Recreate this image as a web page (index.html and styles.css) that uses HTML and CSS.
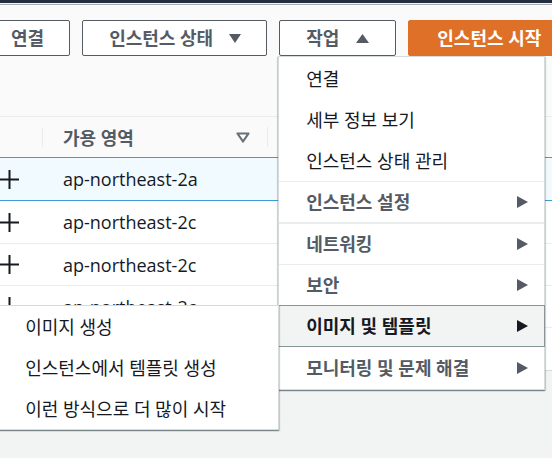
FILE: index.html
```html
<!DOCTYPE html>
<html lang="ko">
<head>
<meta charset="utf-8">
<link rel="stylesheet" href="styles.css">
</head>
<body>
<div class="topbar"></div>
<div class="topline"></div>
<div class="page">
  <div class="toolbar">
    <button class="btn">연결</button>
    <button class="btn">인스턴스 상태
      <svg class="caret" width="12" height="9" viewBox="0 0 12 9"><polygon points="0,0 12,0 6,9" fill="#545b64"/></svg>
    </button>
    <div class="actions">
      <button class="btn">작업
        <svg class="caret" width="13" height="9" viewBox="0 0 13 9"><polygon points="0,9 13,9 6.5,0" fill="#545b64"/></svg>
      </button>
      <ul class="menu">
        <li class="item">연결</li>
        <li class="item">세부 정보 보기</li>
        <li class="item">인스턴스 상태 관리</li>
        <li class="cat first">인스턴스 설정
          <svg class="arrow" width="11" height="12" viewBox="0 0 11 12"><polygon points="0,0 11,6 0,12" fill="#545b64"/></svg>
        </li>
        <li class="cat">네트워킹
          <svg class="arrow" width="11" height="12" viewBox="0 0 11 12"><polygon points="0,0 11,6 0,12" fill="#545b64"/></svg>
        </li>
        <li class="cat">보안
          <svg class="arrow" width="11" height="12" viewBox="0 0 11 12"><polygon points="0,0 11,6 0,12" fill="#545b64"/></svg>
        </li>
        <li class="cat active">이미지 및 템플릿
          <svg class="arrow" width="11" height="12" viewBox="0 0 11 12"><polygon points="0,0 11,6 0,12" fill="#16191f"/></svg>
          <ul class="sub">
            <li class="item">이미지 생성</li>
            <li class="item">인스턴스에서 템플릿 생성</li>
            <li class="item">이런 방식으로 더 많이 시작</li>
          </ul>
        </li>
        <li class="cat after">모니터링 및 문제 해결
          <svg class="arrow" width="11" height="12" viewBox="0 0 11 12"><polygon points="0,0 11,6 0,12" fill="#545b64"/></svg>
        </li>
      </ul>
    </div>
    <button class="btn primary">인스턴스 시작</button>
  </div>

  <div class="table">
    <div class="thead">
      <div class="c-exp"></div>
      <div class="sep"></div>
      <div class="h-az">
        <span>가용 영역</span>
        <svg width="14" height="11" viewBox="0 0 14 11"><polygon points="1.5,1.5 12.5,1.5 7,9.5" fill="#fff" stroke="#687078" stroke-width="2.2" stroke-linejoin="round"/></svg>
      </div>
      <div class="sep"></div>
    </div>
    <div class="row sel">
      <div class="c-exp"><svg width="19" height="19" viewBox="0 0 19 19"><path d="M0 9.5H19M9.5 0V19" stroke="#16191f" stroke-width="2"/></svg></div>
      <div class="c-az">ap-northeast-2a</div>
    </div>
    <div class="row">
      <div class="c-exp"><svg width="19" height="19" viewBox="0 0 19 19"><path d="M0 9.5H19M9.5 0V19" stroke="#16191f" stroke-width="2"/></svg></div>
      <div class="c-az">ap-northeast-2c</div>
    </div>
    <div class="row">
      <div class="c-exp"><svg width="19" height="19" viewBox="0 0 19 19"><path d="M0 9.5H19M9.5 0V19" stroke="#16191f" stroke-width="2"/></svg></div>
      <div class="c-az">ap-northeast-2c</div>
    </div>
    <div class="row">
      <div class="c-exp"><svg width="19" height="19" viewBox="0 0 19 19"><path d="M0 9.5H19M9.5 0V19" stroke="#16191f" stroke-width="2"/></svg></div>
      <div class="c-az">ap-northeast-2c</div>
    </div>
    <div class="row last"></div>
  </div>
</div>
</body>
</html>
```
FILE: styles.css
```css
html, body {
  margin: 0;
  padding: 0;
}
body {
  width: 552px;
  height: 458px;
  overflow: hidden;
  background: #f2f3f3;
  font-family: "Open Sans", "Noto Sans CJK KR", sans-serif;
  font-feature-settings: "palt";
  color: #16191f;
}
.topbar {
  height: 3px;
  background: #232f3e;
  border-bottom: 1px solid #f4f4f4;
}
.topline {
  height: 1px;
  background: #a7adb2;
}
.page {
  background: #fafafa;
}
.toolbar {
  display: flex;
  gap: 12px;
  margin-left: -16px;
  padding: 15px 0 60px;
}
.btn {
  flex: none;
  box-sizing: border-box;
  height: 36px;
  display: flex;
  align-items: center;
  gap: 16px;
  padding: 0 25px 0 26px;
  border: 1px solid #545b64;
  border-radius: 2px;
  background: #fff;
  font-family: "Open Sans", "Noto Sans CJK KR", sans-serif;
  font-feature-settings: "palt";
  font-weight: 700;
  font-size: 18px;
  line-height: 1;
  color: #545b64;
  white-space: nowrap;
}
.actions .btn {
  gap: 17px;
  padding: 0 26px;
}
.primary {
  background: #de7027;
  border-color: #de7027;
  color: #fff;
  padding: 0 28px;
}
.actions {
  position: relative;
  flex: none;
}
.menu, .sub {
  list-style: none;
  margin: 0;
  padding: 0;
  background: #fff;
  box-sizing: border-box;
  border: 1px solid #d5dbdb;
  box-shadow: 0 1px 1px 0 rgba(0, 28, 36, 0.3), 1px 1px 1px 0 rgba(0, 28, 36, 0.15), -1px 1px 1px 0 rgba(0, 28, 36, 0.15);
}
.menu {
  position: absolute;
  top: 100%;
  left: -1px;
  width: 267px;
  padding-top: 1px;
  z-index: 10;
}
.item {
  box-sizing: border-box;
  height: 41px;
  display: flex;
  align-items: center;
  padding-left: 27px;
  font-size: 18px;
  line-height: 1;
  color: #16191f;
  white-space: nowrap;
}
.cat {
  box-sizing: border-box;
  height: 41px;
  display: flex;
  align-items: center;
  justify-content: space-between;
  padding: 0 16px 0 27px;
  border-top: 1px solid #eaeded;
  font-size: 18px;
  font-weight: 700;
  line-height: 1;
  color: #545b64;
  white-space: nowrap;
}
.cat.first {
  height: 42px;
  border-bottom: 1px solid #eaeded;
}
.cat.active {
  position: relative;
  height: 42px;
  margin: 0 -1px;
  padding: 0 16px 0 27px;
  border: 1px solid #879596;
  background: #f2f3f3;
  color: #16191f;
}
.cat.after {
  border-top: 0;
  height: 42px;
}
.sub {
  position: absolute;
  right: 100%;
  top: -1px;
  width: 282px;
  z-index: 11;
}
.sub .item {
  font-weight: 400;
}
.table {
  background: #fff;
  border-top: 1px solid #eaeded;
}
.thead {
  display: flex;
  align-items: center;
  height: 40px;
  background: #fafafa;
}
.c-exp {
  flex: none;
  width: 42px;
  display: flex;
  align-items: center;
}
.sep {
  flex: none;
  width: 1px;
  height: 20px;
  background: #eaeded;
}
.h-az {
  flex: none;
  box-sizing: border-box;
  width: 224px;
  display: flex;
  align-items: center;
  justify-content: space-between;
  padding: 0 17px 0 20px;
  font-size: 18px;
  font-weight: 700;
  color: #545b64;
}
.h-az svg {
  display: block;
}
.row {
  box-sizing: border-box;
  display: flex;
  align-items: center;
  height: 42px;
  border-bottom: 1px solid #eaeded;
  background: #fff;
}
.row.sel {
  height: 44px;
  border-top: 1px solid #3f9bd6;
  border-bottom: 1px solid #3f9bd6;
  background: #f1faff;
}
.row.sel + .row {
  height: 43px;
}
.row.last {
  height: 43px;
  border-bottom: 1px solid #d5dbdb;
}
.c-exp svg {
  display: block;
}
.c-az {
  padding-left: 21px;
  font-family: "Open Sans", sans-serif;
  font-size: 18px;
  line-height: 1;
  color: #16191f;
}
```
